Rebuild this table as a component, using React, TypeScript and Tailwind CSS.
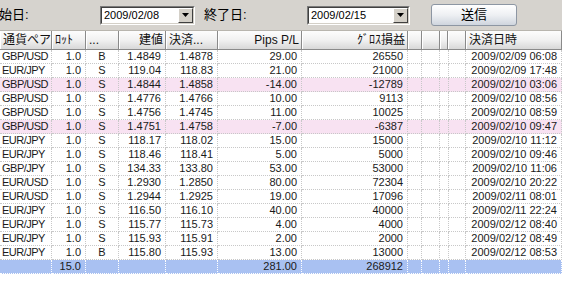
import { ReactNode } from "react";

const cols =
  "grid grid-cols-[52px_34px_33px_47px_52px_84px_106px_14px_18px_8px_18px_96px]";

const font = {
  fontFamily: '"Liberation Sans", "Noto Sans CJK JP", sans-serif',
};

type Row = [string, string, string, string, string, string, string, string];

const rows: Row[] = [
  ["GBP/USD", "1.0", "B", "1.4849", "1.4878", "29.00", "26550", "2009/02/09 06:08"],
  ["EUR/JPY", "1.0", "S", "119.04", "118.83", "21.00", "21000", "2009/02/09 17:48"],
  ["GBP/USD", "1.0", "S", "1.4844", "1.4858", "-14.00", "-12789", "2009/02/10 03:06"],
  ["GBP/USD", "1.0", "S", "1.4776", "1.4766", "10.00", "9113", "2009/02/10 08:56"],
  ["GBP/USD", "1.0", "S", "1.4756", "1.4745", "11.00", "10025", "2009/02/10 08:59"],
  ["GBP/USD", "1.0", "S", "1.4751", "1.4758", "-7.00", "-6387", "2009/02/10 09:47"],
  ["EUR/JPY", "1.0", "S", "118.17", "118.02", "15.00", "15000", "2009/02/10 11:12"],
  ["EUR/JPY", "1.0", "S", "118.46", "118.41", "5.00", "5000", "2009/02/10 09:46"],
  ["GBP/JPY", "1.0", "S", "134.33", "133.80", "53.00", "53000", "2009/02/10 11:06"],
  ["EUR/USD", "1.0", "S", "1.2930", "1.2850", "80.00", "72304", "2009/02/10 20:22"],
  ["EUR/USD", "1.0", "S", "1.2944", "1.2925", "19.00", "17096", "2009/02/11 08:01"],
  ["EUR/JPY", "1.0", "S", "116.50", "116.10", "40.00", "40000", "2009/02/11 22:24"],
  ["EUR/JPY", "1.0", "S", "115.77", "115.73", "4.00", "4000", "2009/02/12 08:40"],
  ["EUR/JPY", "1.0", "S", "115.93", "115.91", "2.00", "2000", "2009/02/12 08:49"],
  ["EUR/JPY", "1.0", "B", "115.80", "115.93", "13.00", "13000", "2009/02/12 08:53"],
];

function DateBox({ value, w }: { value: string; w: string }) {
  return (
    <div
      className={`flex h-[19px] items-stretch border border-[#7a7a7a] border-r-white border-b-white bg-white ${w}`}
    >
      <div className="flex flex-1 items-center border border-[#404040] border-r-[#d4d0c8] border-b-[#d4d0c8] pl-[2px] text-[11px] text-black">
        {value}
        <div className="ml-auto flex h-full w-[15px] items-center justify-center border border-white border-r-[#404040] border-b-[#404040] bg-[#d4d0c8]">
          <svg width="7" height="4" viewBox="0 0 7 4">
            <path d="M0 0h7L3.5 4z" fill="#000" />
          </svg>
        </div>
      </div>
    </div>
  );
}

function Head({ children, align = "left" }: { children?: ReactNode; align?: string }) {
  return (
    <div
      className={`flex h-[18px] items-center overflow-hidden whitespace-nowrap border-r border-r-[#8a8a8a] border-l border-l-white bg-gradient-to-b from-[#fdfdfd] via-[#f1f1f1] to-[#d8d8d8] px-[2px] text-[12px] leading-none text-[#111] ${
        align === "right" ? "justify-end" : "justify-start"
      }`}
    >
      {children}
    </div>
  );
}

function Cell({
  children,
  align = "right",
  total = false,
}: {
  children?: ReactNode;
  align?: string;
  total?: boolean;
}) {
  const a =
    align === "right"
      ? "justify-end px-[4px]"
      : align === "center"
        ? "justify-center px-[4px]"
        : "justify-start pl-[2px] tracking-[-0.5px]";
  return (
    <div
      className={`flex h-[14px] items-center overflow-hidden whitespace-nowrap border-r border-b border-dotted text-[11px] ${a} ${
        total ? "border-white" : "border-[#c8c8c8]"
      }`}
    >
      {children}
    </div>
  );
}

export default function App() {
  return (
    <div className="h-[281px] w-[562px] overflow-hidden bg-white text-[#1a1a1a]" style={font}>
      {/* toolbar */}
      <div className="flex h-[30px] items-center bg-[#d6d3ce] text-[13px] text-black">
        <span className="-ml-[1px] w-[101px]">始日:</span>
        <DateBox value="2009/02/08" w="w-[95px]" />
        <span className="ml-[9px] w-[103px]">終了日:</span>
        <DateBox value="2009/02/15" w="w-[103px]" />
        <button className="ml-[21px] h-[22px] w-[86px] rounded-[3px] border border-[#8d96a3] bg-gradient-to-b from-[#ffffff] via-[#eef0f3] to-[#cfd5de] text-[13px] text-black">
          送信
        </button>
      </div>

      {/* header */}
      <div className={`${cols} border-t border-t-[#b8b5ae] border-b border-b-[#8a8a8a]`}>
        <Head>通貨ペア</Head>
        <Head>ﾛｯﾄ</Head>
        <Head>...</Head>
        <Head align="right">建値</Head>
        <Head>決済...</Head>
        <Head align="right">Pips P/L</Head>
        <Head align="right">ｸﾞﾛｽ損益</Head>
        <Head />
        <Head />
        <Head />
        <Head />
        <Head>決済日時</Head>
      </div>

      {/* rows */}
      {rows.map((r, i) => (
        <div
          key={i}
          className={`${cols} ${r[5].startsWith("-") ? "bg-[#f8e2f2]" : "bg-white"}`}
        >
          <Cell align="left">{r[0]}</Cell>
          <Cell>{r[1]}</Cell>
          <Cell align="center">{r[2]}</Cell>
          <Cell>{r[3]}</Cell>
          <Cell>{r[4]}</Cell>
          <Cell>{r[5]}</Cell>
          <Cell>{r[6]}</Cell>
          <Cell />
          <Cell />
          <Cell />
          <Cell />
          <Cell>{r[7]}</Cell>
        </div>
      ))}

      {/* total */}
      <div className={`${cols} bg-[#a9c1f2]`}>
        <Cell total />
        <Cell total>15.0</Cell>
        <Cell total />
        <Cell total />
        <Cell total />
        <Cell total>281.00</Cell>
        <Cell total>268912</Cell>
        <Cell total />
        <Cell total />
        <Cell total />
        <Cell total />
        <Cell total />
      </div>
    </div>
  );
}
